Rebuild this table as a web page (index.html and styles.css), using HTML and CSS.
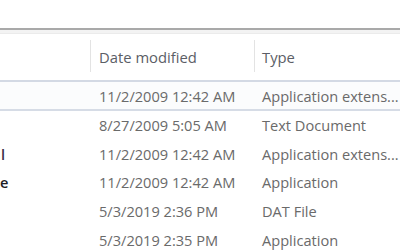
FILE: index.html
```html
<!DOCTYPE html>
<html>
<head>
<meta charset="utf-8">
<link rel="stylesheet" href="styles.css">
</head>
<body>
<div class="pane">
  <div class="top"></div>
  <div class="header">
    <div class="hcell name"></div>
    <div class="hcell date"><span>Date modified</span></div>
    <div class="hcell type"><span>Type</span></div>
  </div>
  <div class="rows">
    <div class="row first">
      <div class="cell name"></div>
      <div class="cell date">11/2/2009 12:42 AM</div>
      <div class="cell type">Application extens...</div>
    </div>
    <div class="row">
      <div class="cell name"></div>
      <div class="cell date">8/27/2009 5:05 AM</div>
      <div class="cell type">Text Document</div>
    </div>
    <div class="row">
      <div class="cell name"><span class="n3">l</span></div>
      <div class="cell date">11/2/2009 12:42 AM</div>
      <div class="cell type">Application extens...</div>
    </div>
    <div class="row">
      <div class="cell name"><span class="n4">e</span></div>
      <div class="cell date">11/2/2009 12:42 AM</div>
      <div class="cell type">Application</div>
    </div>
    <div class="row">
      <div class="cell name"></div>
      <div class="cell date">5/3/2019 2:36 PM</div>
      <div class="cell type">DAT File</div>
    </div>
    <div class="row">
      <div class="cell name"></div>
      <div class="cell date">5/3/2019 2:35 PM</div>
      <div class="cell type">Application</div>
    </div>
  </div>
</div>
</body>
</html>
```
FILE: styles.css
```css
html, body {
  margin: 0;
  padding: 0;
  background: #ffffff;
  overflow: hidden;
}
.pane {
  width: 400px;
  height: 251px;
  font-family: "Open Sans", "Noto Sans", sans-serif;
  font-size: 14.6px;
  color: #6a6a6a;
}
.top {
  height: 28px;
  border-bottom: 2px solid #a9a9a9;
}
.header {
  display: flex;
  height: 50px;
  border-bottom: 2px solid #d3d9e4;
  background: linear-gradient(#f3f3f3 0, #f3f3f3 3px, #ebebeb 3px, #ebebeb 4px, #ffffff 4px);
}
.hcell {
  display: flex;
  align-items: center;
  position: relative;
  color: #5b5e66;
  font-size: 14.8px;
}
.hcell.name { width: 90px; }
.hcell.date { width: 164px; padding-left: 9px; box-sizing: border-box; }
.hcell.type { flex: 1; padding-left: 8px; }
.hcell.date::before,
.hcell.type::before {
  content: "";
  position: absolute;
  left: 0;
  top: 10px;
  bottom: 8px;
  width: 1px;
  background: #e3e3e3;
}
.hcell span { margin-top: 4px; }
.rows { display: flex; flex-direction: column; }
.row {
  display: flex;
  height: 28.6px;
  align-items: center;
  white-space: nowrap;
}
.row.first {
  height: 27px;
  background: #fbfcfd;
  border-bottom: 2px solid #d6dce6;
}
.cell.name {
  width: 90px;
  padding-left: 1px;
  box-sizing: border-box;
  color: #1c1c24;
  font-weight: 600;
}
.cell.name span.n3 { color: #3a3048; }
.cell.name span.n4 { margin-left: -1px; }
.cell.date { width: 164px; padding-left: 9px; box-sizing: border-box; }
.cell.type { flex: 1; padding-left: 8px; overflow: hidden; }
```
